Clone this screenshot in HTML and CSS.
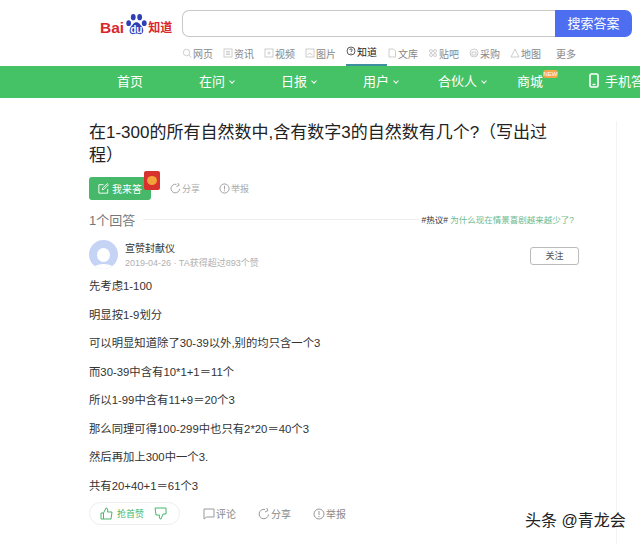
FILE: index.html
```html
<!DOCTYPE html>
<html lang="zh-CN">
<head>
  <meta charset="UTF-8">
  <title>百度知道</title>
  <link rel="stylesheet" href="styles.css">
</head>
<body>
  <!-- Header -->
  <header class="header">
    <div class="logo">
      <span class="logo-bai">Bai</span>
      <span class="logo-paw">
        <svg width="22" height="23" viewBox="0 0 24 25">
          <ellipse cx="4" cy="11" rx="2.6" ry="3.2" fill="#2f3fb8"/>
          <ellipse cx="9" cy="4.500" rx="2.600" ry="3.400" fill="#2f3fb8"/>
          <ellipse cx="16" cy="4.500" rx="2.600" ry="3.400" fill="#2f3fb8"/>
          <ellipse cx="21" cy="11" rx="2.600" ry="3.200" fill="#2f3fb8"/>
          <path d="M12.500 10c-3 0-4 3-6 5-2 2-2.500 8 2 8 1.500 0 2.500-.6 4-.6s2.500.6 4 .6c4.500 0 4-6 2-8-2-2-3-5-6-5z" fill="#2f3fb8"/>
        </svg>
        <span class="logo-du">du</span>
      </span>
      <span class="logo-zhidao">知道</span>
    </div>
    <div class="search-col">
      <div class="search">
        <div class="search-input"></div>
        <div class="search-btn">搜索答案</div>
      </div>
      <ul class="channels">
        <li><svg class="ch-icon" viewBox="0 0 10 10"><circle cx="4.500" cy="4.500" r="3.200"/><path d="M7 7l2.500 2.500"/></svg>网页</li>
        <li><svg class="ch-icon" viewBox="0 0 10 10"><rect x="1" y="1" width="8" height="8"/><path d="M3 3.500h4M3 5h4M3 6.500h4"/></svg>资讯</li>
        <li><svg class="ch-icon" viewBox="0 0 10 10"><rect x="1" y="1" width="8" height="8"/><circle cx="5" cy="5" r="1"/></svg>视频</li>
        <li><svg class="ch-icon" viewBox="0 0 10 10"><rect x="1" y="1" width="8" height="8"/><path d="M2.500 7l2-2 3 2"/></svg>图片</li>
        <li class="active"><svg class="ch-icon" viewBox="0 0 10 10"><circle cx="5" cy="5" r="4"/><path d="M3.800 4c0-1.600 2.400-1.600 2.400 0 0 1-1.200 1-1.200 2M5 7v.8"/></svg>知道</li>
        <li><svg class="ch-icon" viewBox="0 0 10 10"><path d="M2 1h4.500L8.500 3v6H2z"/></svg>文库</li>
        <li><svg class="ch-icon" viewBox="0 0 10 10"><circle cx="3" cy="3" r="1.500"/><circle cx="7" cy="3" r="1.500"/><circle cx="3" cy="7" r="1.500"/><circle cx="7" cy="7" r="1.500"/></svg>贴吧</li>
        <li><svg class="ch-icon" viewBox="0 0 10 10"><circle cx="5" cy="5" r="4"/><path d="M3 4h4v3H3z"/></svg>采购</li>
        <li><svg class="ch-icon" viewBox="0 0 10 10"><path d="M5 1l2 4 2 4H1l2-4z"/></svg>地图</li>
        <li class="more">更多</li>
      </ul>
    </div>
  </header>

  <!-- Green nav -->
  <nav class="nav">
    <a class="nav-home">首页</a>
    <a class="nav-ask">在问<i class="caret"></i></a>
    <a class="nav-daily">日报<i class="caret"></i></a>
    <a class="nav-user">用户<i class="caret"></i></a>
    <a class="nav-partner">合伙人<i class="caret"></i></a>
    <a class="nav-shop">商城<span class="new-tag">NEW</span></a>
    <a class="nav-phone"><svg width="10" height="15" viewBox="0 0 10 15"><rect x="1" y="1" width="8" height="13" rx="1.500" fill="none" stroke="#fff" stroke-width="1.600"/><path d="M3.500 11.500h3" stroke="#fff" stroke-width="1.400"/></svg>手机答</a>
  </nav>

  <main class="main">
    <h1 class="title">在1-300的所有自然数中,含有数字3的自然数有几个?（写出过程）</h1>

    <div class="q-actions">
      <div class="answer-btn">
        <svg width="11" height="11" viewBox="0 0 13 13" fill="none" stroke="#fff" stroke-width="1.100"><path d="M11.500 7v5H1V2h5.500"/><path d="M5 8l.4-2L11 .8l1.300 1.300L7 7.500z"/></svg>
        我来答
        <span class="red-packet"><span class="coin"></span></span>
      </div>
      <span class="q-link">
        <svg class="act-icon" viewBox="0 0 12 12"><path d="M10.500 6.500A4.700 4.700 0 1 1 7 1.500M7 4l3-1.500L8.500 0"/></svg>分享
      </span>
      <span class="q-link">
        <svg class="act-icon" viewBox="0 0 12 12"><circle cx="6" cy="6" r="5"/><path d="M6 3v4M6 8v1"/></svg>举报
      </span>
    </div>

    <div class="answers-head">
      <span class="answers-count">1个回答</span>
      <span class="answers-rule"></span>
      <span class="hot"><b>#热议#</b> 为什么现在情景喜剧越来越少了?</span>
    </div>

    <div class="author">
      <div class="avatar"><span class="avatar-head"></span><span class="avatar-body"></span></div>
      <div class="author-info">
        <div class="author-name">宣赞封献仪</div>
        <div class="author-meta">2019-04-26 · TA获得超过893个赞</div>
      </div>
      <div class="follow">关注</div>
    </div>

    <div class="answer">
      <p>先考虑1-100</p>
      <p>明显按1-9划分</p>
      <p>可以明显知道除了30-39以外,别的均只含一个3</p>
      <p>而30-39中含有10*1+1＝11个</p>
      <p>所以1-99中含有11+9＝20个3</p>
      <p>那么同理可得100-299中也只有2*20＝40个3</p>
      <p>然后再加上300中一个3.</p>
      <p>共有20+40+1＝61个3</p>
    </div>

    <div class="a-actions">
      <div class="vote">
        <span class="vote-up">
          <svg width="13" height="13" viewBox="0 0 13 13" fill="none" stroke="#45b86a" stroke-width="1"><path d="M1 6h2.500v6H1zM3.500 6L6 1c1.500 0 2 1 1.500 4H12l-1 7H3.500"/></svg>
          抢首赞
        </span>
        <svg width="13" height="13" viewBox="0 0 13 13" fill="none" stroke="#45b86a" stroke-width="1"><path d="M1 1h11v6H9L7 12c-1.500 0-2-1-1.500-4H2z"/></svg>
      </div>
      <span class="a-link">
        <svg class="act-icon" viewBox="0 0 12 12"><path d="M1 1h10v8H3.500L1 11z"/></svg>评论
      </span>
      <span class="a-link">
        <svg class="act-icon" viewBox="0 0 12 12"><path d="M10.500 6.500A4.700 4.700 0 1 1 7 1.500M7 4l3-1.500L8.500 0"/></svg>分享
      </span>
      <span class="a-link">
        <svg class="act-icon" viewBox="0 0 12 12"><circle cx="6" cy="6" r="5"/><path d="M6 3v4M6 8v1"/></svg>举报
      </span>
    </div>
  </main>

  <div class="watermark">头条 @青龙会</div>
</body>
</html>
```

FILE: styles.css
```css
html, body {
  height: 100%;
}
body {
  margin: 0;
  width: 640px;
  height: 544px;
  overflow: hidden;
  background: #fff;
  position: relative;
  font-family: "Liberation Sans", "Noto Sans CJK SC", sans-serif;
  color: #333;
}

/* header */
.header {
  height: 66px;
  display: flex;
  box-sizing: border-box;
  padding: 10px 8px 0 99px;
}
.logo {
  width: 83px;
  height: 27px;
  display: flex;
  align-items: flex-end;
  font-weight: bold;
  color: #d9262c;
}
.logo-bai {
  font-size: 15.500px;
  line-height: 18px;
  margin: 0 0 0 1px;
}
.logo-paw {
  position: relative;
  width: 23px;
  height: 24px;
  margin-left: 1px;
}
.logo-du {
  position: absolute;
  left: 5px;
  top: 11px;
  color: #fff;
  font-size: 10px;
  line-height: 11px;
}
.logo-zhidao {
  font-size: 12px;
  line-height: 18px;
}
.search-col {
  width: 450px;
}
.search {
  display: flex;
  height: 27px;
}
.search-input {
  flex: 1;
  border: 1px solid #c8c8c8;
  border-right: 0;
  border-radius: 7px 0 0 7px;
  background: #fff;
}
.search-btn {
  width: 77px;
  background: #4e6ef2;
  color: #fff;
  border-radius: 0 7px 7px 0;
  font-size: 13px;
  line-height: 27px;
  text-align: center;
}
.channels {
  display: flex;
  list-style: none;
  margin: 0;
  padding: 0;
  height: 29px;
  font-size: 10px;
  color: #888;
}
.channels li {
  width: 41px;
  display: flex;
  align-items: center;
  gap: 1px;
  box-sizing: border-box;
  padding-top: 3px;
  white-space: nowrap;
}
.channels li.active {
  color: #222;
  border-bottom: 2px solid #3f8f9f;
  padding-top: 1px;
}
.channels li.more {
  padding-left: 5px;
}
.ch-icon {
  width: 10px;
  height: 10px;
  fill: none;
  stroke: #c0c0c0;
  stroke-width: 0.8;
  flex: none;
}
.channels li.active .ch-icon {
  stroke: #333;
}

/* green nav */
.nav {
  height: 32px;
  background: #45c166;
  color: #fff;
  font-size: 13px;
  line-height: 32px;
  position: relative;
  display: flex;
  white-space: nowrap;
}
.nav a {
  display: block;
  flex: none;
}
.nav-home { margin-left: 117px; width: 82px; }
.nav-ask { width: 82px; }
.nav-daily { width: 82px; }
.nav-user { width: 75px; }
.nav-partner { width: 79px; }
.nav-shop { width: 72px; position: relative; }
.caret {
  display: inline-block;
  width: 3px;
  height: 3px;
  border-right: 1px solid #fff;
  border-bottom: 1px solid #fff;
  transform: rotate(45deg);
  margin: 0 0 3px 5px;
}
.new-tag {
  position: absolute;
  left: 26px;
  top: 4px;
  width: 15px;
  height: 8px;
  border-radius: 3px;
  background: #f5a64a;
  font-size: 6px;
  line-height: 8px;
  text-align: center;
}
.nav-phone svg {
  vertical-align: -2px;
  margin-right: 6px;
}

/* question */
.main {
  height: 446px;
  box-sizing: border-box;
  padding: 0 0 0 89px;
  border-right: 1px solid #f3f3f3;
  width: 617px;
}
.main > * {
  width: 490px;
}
.title {
  margin: 23px 0 0;
  font-size: 17px;
  line-height: 23px;
  font-weight: 400;
  color: #222;
  width: 462px;
}
.q-actions {
  display: flex;
  align-items: center;
  margin-top: 10px;
  height: 23px;
  font-size: 9px;
  color: #aaa;
}
.answer-btn {
  position: relative;
  width: 62px;
  height: 23px;
  background: #45b86a;
  border-radius: 3px;
  color: #fff;
  font-size: 10px;
  display: flex;
  align-items: center;
  gap: 3px;
  box-sizing: border-box;
  padding-left: 9px;
  margin-right: 19px;
}
.red-packet {
  position: absolute;
  right: -9px;
  top: -6px;
  width: 16px;
  height: 19px;
  background: #d8322f;
  border-radius: 2px;
}
.coin {
  position: absolute;
  left: 3px;
  top: 5px;
  width: 10px;
  height: 9px;
  border-radius: 50%;
  background: #f3a13a;
}
.q-link {
  display: flex;
  align-items: center;
  gap: 1px;
  margin-right: 19px;
}
.act-icon {
  width: 11px;
  height: 11px;
  fill: none;
  stroke: #999;
  stroke-width: 1;
  flex: none;
}

.answers-head {
  display: flex;
  align-items: center;
  margin-top: 8px;
  height: 22px;
}
.answers-count {
  font-size: 13px;
  color: #777;
  width: 54px;
  flex: none;
}
.answers-rule {
  flex: 1;
  height: 1px;
  background: #eee;
  margin-right: 2px;
}
.hot {
  font-size: 8.500px;
  color: #6fb98a;
  white-space: nowrap;
  margin-right: 5px;
}
.hot b {
  font-weight: 400;
  color: #333;
}

.author {
  display: flex;
  align-items: center;
  margin-top: 10px;
  height: 29px;
}
.avatar {
  width: 29px;
  height: 29px;
  border-radius: 50%;
  background: #c5d4f5;
  position: relative;
  overflow: hidden;
  flex: none;
}
.avatar-head {
  position: absolute;
  left: 8px;
  top: 8px;
  width: 13px;
  height: 14px;
  border-radius: 50%;
  background: #fff;
}
.avatar-body {
  position: absolute;
  left: 3px;
  top: 24px;
  width: 23px;
  height: 12px;
  border-radius: 50%;
  background: #fff;
}
.author-info {
  margin-left: 7px;
  flex: 1;
  padding-top: 3px;
}
.author-name {
  font-size: 10px;
  line-height: 14px;
  color: #333;
}
.author-meta {
  font-size: 9px;
  line-height: 14px;
  color: #b0b0b0;
}
.follow {
  width: 47px;
  height: 16px;
  border: 1px solid #bbb;
  border-radius: 3px;
  font-size: 9px;
  line-height: 16px;
  text-align: center;
  color: #555;
  margin-top: 2px;
}

.answer {
  margin-top: 3px;
  font-size: 11.350px;
  color: #333;
}
.answer p {
  margin: 0;
  height: 28.500px;
  line-height: 28.500px;
}

.a-actions {
  display: flex;
  align-items: center;
  margin-top: 2px;
  height: 23px;
  font-size: 10px;
  color: #888;
}
.vote {
  width: 91px;
  height: 23px;
  box-sizing: border-box;
  border: 1px solid #eee;
  border-radius: 12px;
  display: flex;
  align-items: center;
  justify-content: space-between;
  padding: 0 12px 0 10px;
  margin-right: 23px;
}
.vote-up {
  display: flex;
  align-items: center;
  gap: 4px;
  font-size: 9px;
  color: #45b86a;
}
.a-link {
  display: flex;
  align-items: center;
  gap: 1px;
  margin-right: 22px;
}
.a-link .act-icon {
  width: 12px;
  height: 12px;
}

/* video site watermark */
.watermark {
  position: absolute;
  left: 525px;
  top: 510px;
  font-size: 16px;
  line-height: 22px;
  color: #222;
  white-space: nowrap;
}
```
